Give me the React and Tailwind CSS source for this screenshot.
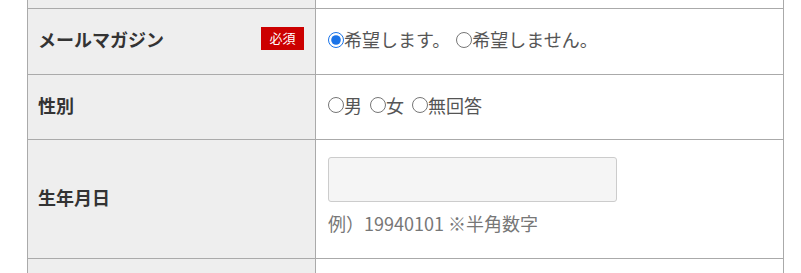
const font = { fontFamily: '"Noto Sans CJK JP", "Noto Sans", sans-serif' };

function Radio({ checked, label }) {
  return (
    <label className="inline-flex items-center">
      <input
        type="radio"
        name="r"
        defaultChecked={checked}
        className="m-0 h-[16px] w-[16px] accent-[#1a73e8]"
      />
      <span>{label}</span>
    </label>
  );
}

function Row({ label, required, height, children }) {
  return (
    <div className={`flex border-b border-[#aaaaaa] ${height}`}>
      <div className="flex w-[288px] shrink-0 items-center justify-between border-r border-[#aaaaaa] bg-[#eeeeee] pb-[4px] pl-[10px] pr-[11px]">
        <span className="text-[18px] font-bold text-[#333333]">{label}</span>
        {required && (
          <span className="mb-[3px] flex h-[23px] w-[43px] items-center justify-center bg-[#cc0000] text-[13px] text-white">
            必須
          </span>
        )}
      </div>
      <div className="flex flex-1 flex-col justify-center bg-white pb-[4px] pl-[12px] text-[18px] text-[#555555]">
        {children}
      </div>
    </div>
  );
}

export default function App() {
  return (
    <div className="h-[273px] overflow-hidden bg-white" style={font}>
      <div className="ml-[27px] w-[757px] border-x border-[#aaaaaa]">
        <div className="flex h-[9px] border-b border-[#aaaaaa]">
          <div className="w-[288px] shrink-0 border-r border-[#aaaaaa] bg-[#eeeeee]" />
          <div className="flex-1 bg-white" />
        </div>

        <Row label="メールマガジン" required height="h-[66px]">
          <div className="flex items-center">
            <Radio checked label="希望します。" />
            <span className="w-[6px]" />
            <Radio label="希望しません。" />
          </div>
        </Row>

        <Row label="性別" height="h-[65px]">
          <div className="flex items-center gap-[8px]">
            <Radio label="男" />
            <Radio label="女" />
            <Radio label="無回答" />
          </div>
        </Row>

        <Row label="生年月日" height="h-[119px]">
          <div className="flex flex-col">
            <input
              type="text"
              className="h-[45px] w-[289px] rounded-[3px] border border-[#cccccc] bg-[#f5f5f5] outline-none"
            />
            <p className="mt-[8px] text-[18px] text-[#777777]">例）19940101 ※半角数字</p>
          </div>
        </Row>

        <div className="flex h-[30px]">
          <div className="w-[288px] shrink-0 border-r border-[#aaaaaa] bg-[#eeeeee]" />
          <div className="flex-1 bg-white" />
        </div>
      </div>
    </div>
  );
}
